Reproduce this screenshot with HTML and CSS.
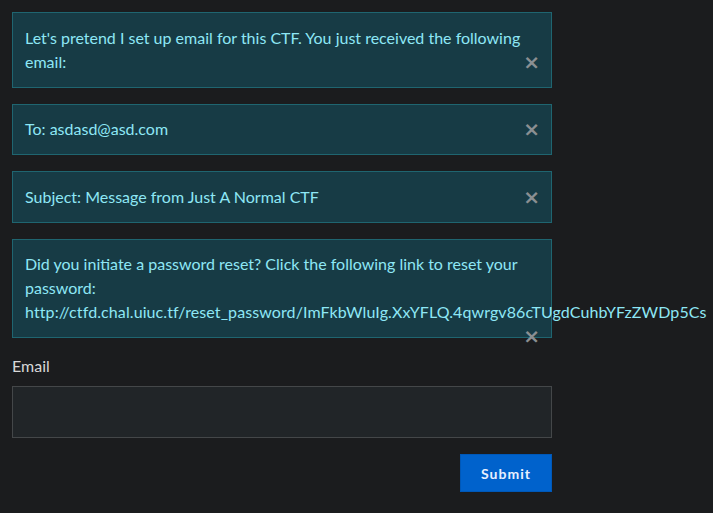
FILE: index.html
```html
<!DOCTYPE html>
<html>
<head>
<meta charset="utf-8">
<link rel="stylesheet" href="styles.css">
</head>
<body>
<div class="wrap">
  <div class="alert">Let's pretend I set up email for this CTF. You just received the following email:<span class="close">&times;</span></div>
  <div class="alert">To: asdasd@asd.com<span class="close">&times;</span></div>
  <div class="alert">Subject: Message from Just A Normal CTF<span class="close">&times;</span></div>
  <div class="alert">Did you initiate a password reset? Click the following link to reset your password: <span class="nowrap">http://ctfd.chal.uiuc.tf/reset_password/ImFkbWluIg.XxYFLQ.4qwrgv86cTUgdCuhbYFzZWDp5Cs</span><span class="close">&times;</span></div>
  <form class="form">
    <label class="label">Email</label>
    <input class="input" type="text">
    <div class="actions"><button class="btn" type="button">Submit</button></div>
  </form>
</div>
</body>
</html>
```
FILE: styles.css
```css
html, body { margin: 0; padding: 0; }
body {
  background: #1b1c1e;
  font-family: Lato, "Open Sans", sans-serif;
  font-size: 16px;
  line-height: 24px;
  color: #dcdcdc;
  padding: 12px;
}
.wrap { width: 540px; }
.alert {
  background: #173b45;
  border: 1px solid #1f6570;
  color: #8ee7f5;
  padding: 12.75px 12px;
  margin-bottom: 16px;
}
.nowrap { white-space: nowrap; letter-spacing: 0.1px; }
.close {
  float: right;
  color: #8a8f92;
  font-family: "DejaVu Sans", sans-serif;
  font-weight: bold;
  font-size: 20px;
  line-height: 24px;
  margin-right: -1px;
}
.form { display: flex; flex-direction: column; }
.label { display: block; margin-bottom: 8px; color: #d8d8d8; }
.input {
  height: 52px;
  box-sizing: border-box;
  background: #212528;
  border: 1px solid #444749;
  margin: 0;
  outline: none;
}
.actions { display: flex; justify-content: flex-end; margin-top: 16px; }
.btn {
  width: 92px;
  height: 38px;
  background: #0062cc;
  border: 1px solid #0058b8;
  color: #e8f0ff;
  font-family: Lato, sans-serif;
  font-weight: bold;
  font-size: 14px;
  letter-spacing: 1px;
  padding: 0;
}
```
